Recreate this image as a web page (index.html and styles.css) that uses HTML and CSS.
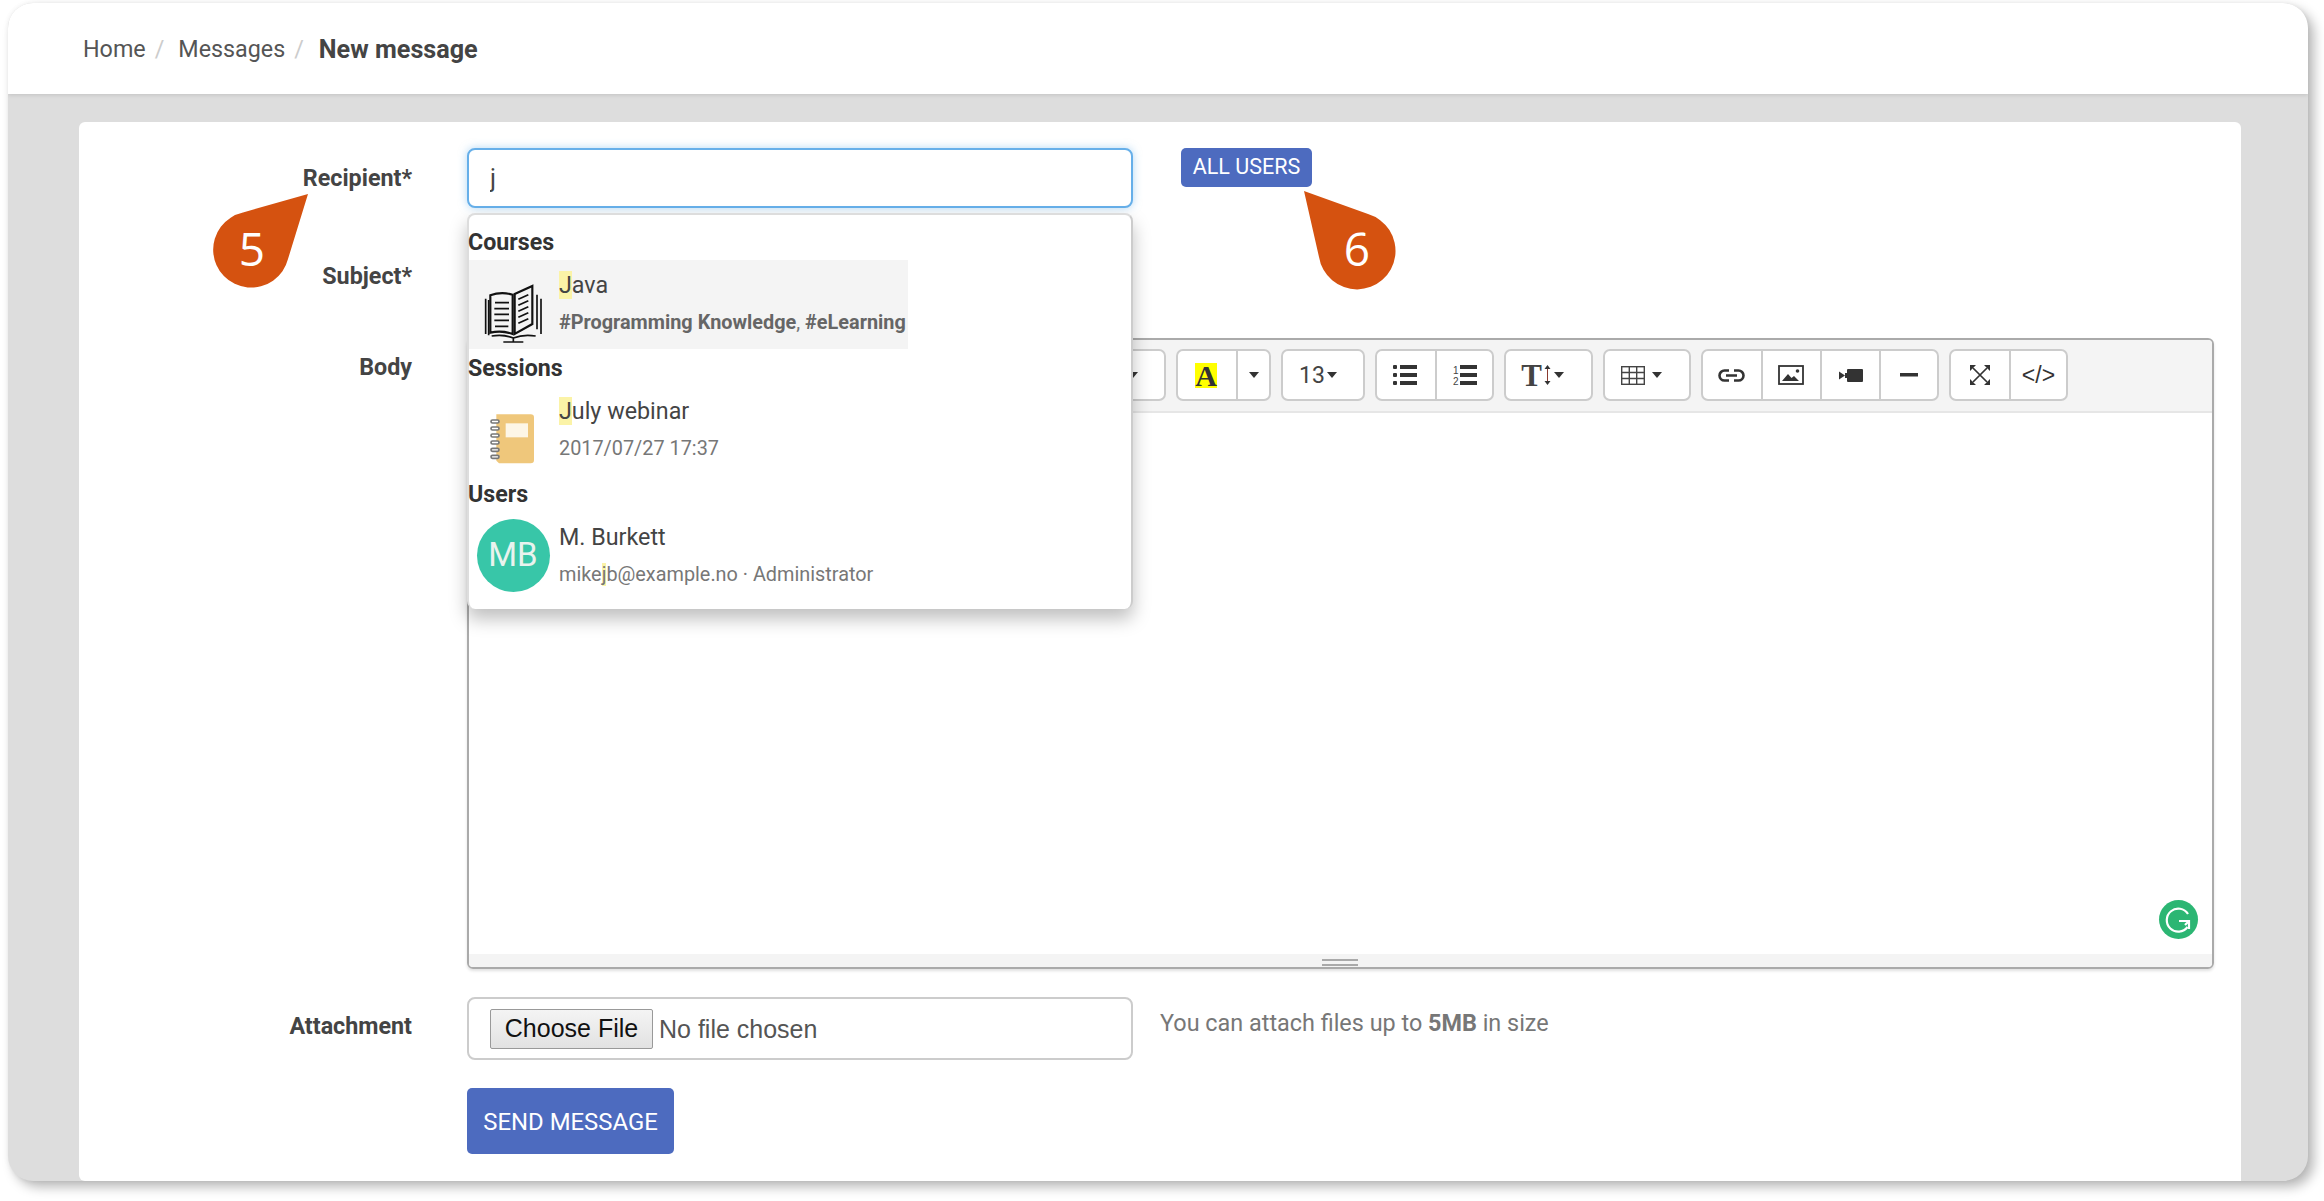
FILE: index.html
```html
<!DOCTYPE html>
<html lang="en">
<head>
<meta charset="utf-8">
<title>New message</title>
<link rel="stylesheet" href="styles.css">
</head>
<body>
<div class="page">
  <div class="window">
    <header class="topbar">
      <nav class="crumbs">
        <a class="crumb">Home</a><span class="sep">/</span>
        <a class="crumb">Messages</a><span class="sep">/</span>
        <strong class="crumb-now">New message</strong>
      </nav>
    </header>
    <main class="main">
      <form class="card">
        <div class="row row-recipient">
          <label class="label">Recipient*</label>
          <div class="field-inline">
            <div class="field-wrap">
              <input class="input input-focus" type="text" value="j">
              <div class="dropdown">
                <div class="group-title">Courses</div>
                <div class="item item-active">
                  <div class="thumb">
                    <svg class="book" width="80" height="80" viewBox="0 0 240 240" fill="none" stroke="#111" stroke-width="6">
                      <path d="M46 70Q78 58 113 68V186Q80 174 46 182Z"/>
                      <path d="M119 66L172 42V156L119 186Z"/>
                      <path d="M32 80V186M41 84V190M186 68V172M198 80V186" stroke-width="5"/>
                      <path d="M60 92H102M58 110H102M58 127H102M58 145H102M60 163H100" stroke-width="5"/>
                      <path d="M130 82L160 68M130 100L160 86M130 118L160 104M130 136L160 122M130 154L160 140" stroke-width="5"/>
                      <path d="M50 192Q85 186 115 198Q145 186 182 192M115 198V210M85 210H145" stroke-width="5"/>
                    </svg>
                  </div>
                  <div class="item-text">
                    <div class="item-title"><mark class="hit">J</mark>ava</div>
                    <div class="item-sub"><b class="strong">#Programming Knowledge</b>, <b class="strong">#eLearning</b></div>
                  </div>
                </div>
                <div class="group-title">Sessions</div>
                <div class="item">
                  <div class="thumb">
                    <svg class="notebook" width="70" height="70" viewBox="0 0 210 210">
                      <path d="M52 28H155Q165 28 165 38V165Q165 175 155 175H60L52 167Z" fill="#efc77b"/>
                      <rect x="80" y="55" width="67" height="42" fill="#fdf6e6"/>
                      <g fill="#fff" stroke="#777" stroke-width="5">
                        <rect x="36" y="45" width="24" height="9" rx="4.5"/>
                        <rect x="36" y="66" width="24" height="9" rx="4.5"/>
                        <rect x="36" y="87" width="24" height="9" rx="4.5"/>
                        <rect x="36" y="108" width="24" height="9" rx="4.5"/>
                        <rect x="36" y="130" width="24" height="9" rx="4.5"/>
                        <rect x="36" y="151" width="24" height="9" rx="4.5"/>
                      </g>
                    </svg>
                  </div>
                  <div class="item-text">
                    <div class="item-title"><mark class="hit">J</mark>uly webinar</div>
                    <div class="item-sub">2017/07/27 17:37</div>
                  </div>
                </div>
                <div class="group-title">Users</div>
                <div class="item">
                  <div class="thumb"><span class="avatar">MB</span></div>
                  <div class="item-text">
                    <div class="item-title">M. Burkett</div>
                    <div class="item-sub">mike<mark class="hit-thin">j</mark>b@example.no · Administrator</div>
                  </div>
                </div>
              </div>
            </div>
            <button class="btn btn-small" type="button">ALL USERS</button>
          </div>
        </div>
        <div class="row row-subject">
          <label class="label">Subject*</label>
          <div class="field-wrap"><input class="input" type="text"></div>
        </div>
        <div class="row row-body">
          <label class="label label-body">Body</label>
          <div class="editor">
            <div class="toolbar">
              <div class="tb-group tb-hidden"><span class="caret"></span></div>
              <div class="tb-group">
                <span class="tb-btn w58 nudge"><span class="hl-a">A</span></span>
                <span class="tb-btn w33"><span class="caret"></span></span>
              </div>
              <div class="tb-group">
                <span class="tb-btn w80"><span class="size-num">13</span><span class="caret"></span></span>
              </div>
              <div class="tb-group">
                <span class="tb-btn w58 nudge">
                  <svg width="24" height="20" viewBox="0 0 24 20" fill="#333"><rect x="7" y="0" width="17" height="4"/><rect x="7" y="8" width="17" height="4"/><rect x="7" y="16" width="17" height="4"/><rect x="0" y="0" width="4" height="4" rx="1"/><rect x="0" y="8" width="4" height="4" rx="1"/><rect x="0" y="16" width="4" height="4" rx="1"/></svg>
                </span>
                <span class="tb-btn w57">
                  <svg width="24" height="20" viewBox="0 0 24 20" fill="#333"><rect x="7" y="0" width="17" height="4"/><rect x="7" y="8" width="17" height="4"/><rect x="7" y="16" width="17" height="4"/><text x="0" y="9" class="ol-num">1</text><text x="0" y="20" class="ol-num">2</text></svg>
                </span>
              </div>
              <div class="tb-group">
                <span class="tb-btn w85 dropdown-btn">
                  <span class="tt">T</span>
                  <svg class="tt-arrow" width="7" height="20" viewBox="0 0 7 20" fill="#333"><path d="M3 3H4V17H3Z" fill="#8a3a30"/><path d="M3.5 0L6.5 4H.5ZM3.5 20L.5 16H6.5Z"/></svg>
                  <span class="caret"></span>
                </span>
              </div>
              <div class="tb-group">
                <span class="tb-btn w84 dropdown-btn">
                  <svg width="24" height="19" viewBox="0 0 24 19" fill="none" stroke="#444" stroke-width="1.4"><rect x=".7" y=".7" width="22.6" height="17.6"/><path d="M8.3 .7V18.3M15.7 .7V18.3M.7 6.5H23.3M.7 12.5H23.3"/></svg>
                  <span class="caret caret-gap"></span>
                </span>
              </div>
              <div class="tb-group">
                <span class="tb-btn w58 nudge">
                  <svg width="27" height="13" viewBox="0 0 27 13" fill="none" stroke="#333" stroke-width="2.6"><path d="M11 1.500H6.500a5 5 0 0 0 0 10H11M16 1.500h4.500a5 5 0 0 1 0 10H16M8 6.500H19"/></svg>
                </span>
                <span class="tb-btn w59 nudge">
                  <svg width="26" height="20" viewBox="0 0 26 20" fill="#333"><rect x="1" y="1" width="24" height="18" fill="none" stroke="#333" stroke-width="1.800"/><path d="M4 16L10 9L13.500 13L16 11L21 16Z"/><circle cx="19.500" cy="6" r="1.800"/></svg>
                </span>
                <span class="tb-btn w59">
                  <svg width="24" height="13" viewBox="0 0 24 13" fill="#333"><rect x="8" y="0" width="16" height="13" rx="1"/><path d="M0 2.500L6 6.500L0 10.500Z"/><rect x="6" y="4" width="3" height="5"/></svg>
                </span>
                <span class="tb-btn w58">
                  <svg width="18" height="4" viewBox="0 0 18 4" fill="#333"><rect width="18" height="3.500"/></svg>
                </span>
              </div>
              <div class="tb-group">
                <span class="tb-btn w58">
                  <svg width="20" height="20" viewBox="0 0 20 20" fill="#333"><path d="M0 0H6L0 6ZM20 0V6L14 0ZM0 20V14L6 20ZM20 20H14L20 14Z"/><path d="M3 3L17 17M17 3L3 17" stroke="#333" stroke-width="1.700"/></svg>
                </span>
                <span class="tb-btn w57"><span class="code-ic">&lt;/&gt;</span></span>
              </div>
            </div>
            <div class="editable">
              <span class="grammarly">
                <svg width="39" height="39" viewBox="0 0 39 39" fill="none" stroke="#fff" stroke-width="2.200"><path d="M29 14A11.500 11.500 0 1 0 28.500 27"/><path d="M20 21H30V29M26 25L30 21"/></svg>
              </span>
            </div>
            <div class="statusbar"><span class="grip"></span></div>
          </div>
        </div>
        <div class="row row-file">
          <label class="label label-file">Attachment</label>
          <div class="field-inline field-file">
            <div class="file-box"><input class="file" type="file"></div>
            <span class="hint">You can attach files up to <b class="strong-hint">5MB</b> in size</span>
          </div>
        </div>
        <div class="row row-send">
          <span></span>
          <div><button class="btn btn-send" type="button">SEND MESSAGE</button></div>
        </div>
      </form>
    </main>
  </div>

  <div class="callout callout-5">
    <svg class="drop" width="2324" height="300" viewBox="0 0 2324 300"><path d="M308 194L243 212.500A38 38 0 1 0 288 259Z" fill="#d55210"/></svg>
    <span class="callout-num num-5">5</span>
  </div>
  <div class="callout callout-6">
    <svg class="drop" width="2324" height="300" viewBox="0 0 2324 300"><path d="M1304 191L1368 214A38.500 38.500 0 1 1 1319 257Z" fill="#d55210"/></svg>
    <span class="callout-num num-6">6</span>
  </div>
</div>
</body>
</html>
```

FILE: styles.css
```css
* { box-sizing: border-box; }
html, body { margin: 0; padding: 0; background: #fff; }
body { font-family: Roboto, "Liberation Sans", sans-serif; color: #444; overflow: hidden; }

.page { position: relative; width: 2324px; height: 1201px; padding: 3px 16px 20px 8px; }
.window {
  height: 1178px;
  border-radius: 25px;
  background: #ddd;
  box-shadow: 6px 6px 12px rgba(0,0,0,.28), 0 0 5px rgba(0,0,0,.06);
  overflow: hidden;
  display: flex;
  flex-direction: column;
}

.topbar {
  position: relative;
  z-index: 2;
  height: 91px;
  background: #fff;
  box-shadow: 0 1px 4px rgba(0,0,0,.12);
  display: flex;
  align-items: center;
  padding-left: 75px;
}
.crumbs { display: flex; align-items: center; font-size: 23.300px; padding-top: 1px; }
.crumb { color: #555; }
.sep { color: #ccc; margin: 0 14px 0 9px; }
.crumb-now { font-weight: 700; color: #444; font-size: 25.200px; margin-left: 1px; }

.main { flex: 1; padding: 28px 67px 0 71px; min-height: 0; }
.card { height: 100%; background: #fff; border-radius: 6px 6px 0 6px; padding: 26px 27px 0 0; }

.row { display: grid; grid-template-columns: 333px 1fr; column-gap: 55px; }
.row-recipient { height: 60px; margin-bottom: 38px; position: relative; z-index: 3; }
.row-subject { height: 60px; margin-bottom: 32px; }
.row-body { height: 631px; margin-bottom: 28px; }
.row-file { height: 63px; margin-bottom: 28px; }
.row-send { height: 66px; }

.label { font-size: 23.300px; font-weight: 700; color: #444; text-align: right; align-self: center; }
.label-body { align-self: start; padding-top: 15px; }
.label-file { padding-bottom: 5px; }

.field-inline { display: flex; align-items: flex-start; gap: 48px; }
.field-wrap { position: relative; width: 666px; height: 60px; }
.input {
  width: 100%;
  height: 100%;
  padding: 0 21px;
  border: 2px solid #ccc;
  border-radius: 8px;
  font: 400 25px Roboto, sans-serif;
  color: #444;
  background: #fff;
  outline: none;
}
.input-focus { border-color: #66afe9; box-shadow: 0 0 8px rgba(102,175,233,.5); }

.dropdown {
  position: absolute;
  left: 0;
  top: 65px;
  width: 666px;
  height: 396px;
  background: #fff;
  border: 2px solid #ddd;
  border-right-color: #ccc;
  border-bottom: 0;
  border-radius: 8px;
  box-shadow: 0 10px 18px rgba(0,0,0,.25);
  padding-top: 8px;
  display: flex;
  flex-direction: column;
  align-items: flex-start;
}
.group-title { height: 37px; line-height: 38px; font-size: 23.200px; font-weight: 700; color: #333; margin-left: -1px; }
.item { display: flex; height: 89px; width: 100%; }
.item-active { width: auto; background: #f4f4f4; padding-right: 2px; }
.thumb { width: 90px; display: flex; align-items: center; justify-content: center; flex: none; }
.book { margin: 15px 0 0 2px; stroke-width: 6.500; }
.notebook { margin-top: 18px; }
.avatar {
  width: 73px; height: 73px; border-radius: 50%;
  background: #38c6a8; color: #e9f3ee;
  font-size: 33px;
  margin: -2px 2px 0 0;
  padding-bottom: 2px;
  display: flex; align-items: center; justify-content: center;
}
.item-text { padding-top: 11px; }
.item-title { font-size: 23.300px; line-height: 28px; color: #444; }
.item-sub { font-size: 19.850px; line-height: 26px; margin-top: 11px; color: #777; white-space: nowrap; }
.strong { font-weight: 700; color: #666; }
.hit { background: #fbf3a7; color: inherit; }
.hit-thin { background: #fbf3a7; color: inherit; }

.btn {
  border: 0;
  background: #4d6bbf;
  color: #fff;
  font-family: Roboto, sans-serif;
  border-radius: 5px;
  padding: 0;
}
.btn-small { width: 131px; height: 39px; font-size: 21.500px; padding-bottom: 2px; }
.btn-send { width: 207px; height: 66px; font-size: 23.900px; padding-top: 2px; }

.editor {
  position: relative;
  border: 2px solid #aaa;
  border-radius: 6px;
  box-shadow: 0 2px 3px rgba(0,0,0,.12);
  display: flex;
  flex-direction: column;
  overflow: hidden;
}
.toolbar {
  height: 73px;
  background: #f4f4f4;
  border-bottom: 2px solid #e6e6e6;
  padding: 9px 0 0 10px;
  display: flex;
  gap: 10px;
  align-items: flex-start;
}
.tb-group { display: flex; height: 52px; background: #fff; border: 2px solid #ccc; border-radius: 7px; }
.tb-hidden { width: 687px; align-items: center; justify-content: flex-end; padding-right: 26px; }
.tb-btn { display: flex; align-items: center; justify-content: center; height: 100%; border-left: 2px solid #ccc; }
.tb-btn:first-child { border-left: 0; }
.nudge { padding-right: 2px; }
.dropdown-btn { padding-right: 12px; }
.w33 { width: 33px; }
.w57 { width: 57px; }
.w58 { width: 58px; }
.w59 { width: 59px; }
.w80 { width: 80px; }
.w84 { width: 84px; }
.w85 { width: 85px; }
.caret { display: inline-block; width: 0; height: 0; border: 5px solid transparent; border-top: 6px solid #333; border-bottom: 0; }
.caret-gap { margin-left: 7px; }
.hl-a { background: #ff0; width: 22px; height: 25px; font: 700 30px/25px "Liberation Serif", serif; color: #333; text-align: center; }
.size-num { font-size: 23px; color: #444; margin-right: 2px; margin-left: -10px; }
.tt { font: 700 31px/1 "Liberation Serif", serif; color: #444; }
.tt-arrow { margin: 0 3px 0 2px; }
.ol-num { font: 400 10px "Liberation Sans", sans-serif; fill: #444; }
.code-ic { font: 400 23px "Liberation Sans", sans-serif; color: #333; }

.editable { flex: 1; position: relative; background: #fff; }
.grammarly {
  position: absolute;
  right: 14px;
  bottom: 15px;
  width: 39px; height: 39px;
  border-radius: 50%;
  background: #2cb673;
  display: flex;
}
.statusbar { height: 13px; background: #f4f4f4; position: relative; }
.grip {
  position: absolute;
  left: 50%;
  margin-left: -19px;
  top: 5px;
  width: 36px;
  height: 7px;
  border-top: 2px solid #aaa;
  border-bottom: 2px solid #aaa;
  background: linear-gradient(#f4f4f4, #f4f4f4);
}

.field-file { gap: 27px; }
.file-box {
  width: 666px;
  height: 63px;
  border: 2px solid #ccc;
  border-radius: 8px;
  padding: 10px 21px;
  display: flex;
  align-items: center;
}
.file { font: 400 25px "Liberation Sans", sans-serif; color: #555; width: 100%; }
.file::file-selector-button {
  width: 163px;
  height: 40px;
  margin-right: 6px;
  padding: 0;
  font: inherit;
  color: #111;
  background: linear-gradient(#f4f4f4, #e2e2e2);
  border: 1px solid #999;
  border-radius: 2px;
}
.hint { font-size: 23.400px; color: #777; padding-top: 12px; }
.strong-hint { font-weight: 700; }

.callout { position: absolute; left: 0; top: 0; width: 0; height: 0; pointer-events: none; }
.drop { position: absolute; left: 0; top: 0; }
.callout-num {
  position: absolute;
  width: 60px;
  text-align: center;
  font: 400 46px/60px "Open Sans", sans-serif;
  color: #fff;
}
.num-5 { left: 222px; top: 218px; }
.num-6 { left: 1327px; top: 218px; }
```
